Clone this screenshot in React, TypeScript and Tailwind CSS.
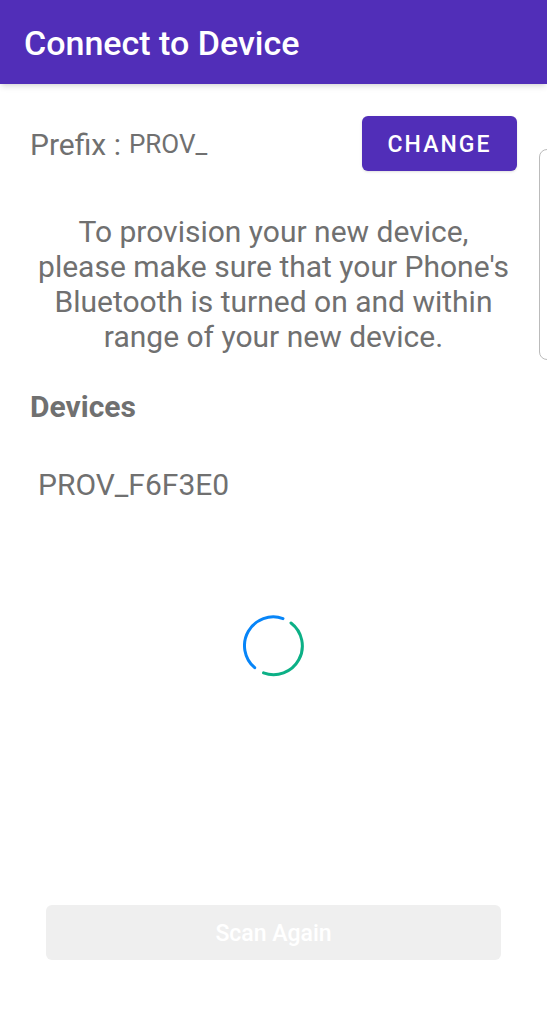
export default function App() {
  return (
    <div className="relative flex min-h-screen flex-col overflow-hidden bg-white font-['Roboto',sans-serif] text-[#707070]">
      <header className="flex h-[84px] items-center bg-[#512eb8] px-6 pt-[2px] shadow-md">
        <h1 className="text-[34px] leading-10 font-medium text-white">Connect to Device</h1>
      </header>
      <main className="flex flex-1 flex-col px-[30px] pt-8">
        <div className="flex items-center justify-between">
          <p className="flex items-center gap-2 pt-[2px] text-[30px]">
            <span>Prefix :</span>
            <span className="text-[26px]">PROV_</span>
          </p>
          <button type="button" className="h-[55px] w-[155px] rounded-md bg-[#512eb8] pt-1 text-[23px] font-medium tracking-[2px] text-white shadow-sm">
            CHANGE
          </button>
        </div>
        <p className="mt-[43px] text-center text-[30px] leading-[35px]">
          To provision your new device,<br />please make sure that your Phone's<br />Bluetooth is turned on and within<br />range of your new device.
        </p>
        <h2 className="mt-[35px] text-[30px] leading-[35px] font-bold">Devices</h2>
        <ul className="mt-[43px] px-2">
          <li>
            <button type="button" className="text-[30px] leading-[35px]">PROV_F6F3E0</button>
          </li>
        </ul>
        <div role="status" aria-label="Scanning" className="mt-[113px] flex justify-center">
          <svg width="62" height="62" viewBox="0 0 62 62" fill="none" strokeWidth="3" strokeLinecap="round">
            <path d="M11.7 52.7 A28.8 28.8 0 0 1 40 3.6" stroke="#0785f8" />
            <path d="M48 8 A28.8 28.8 0 0 1 20.5 57.9" stroke="#0cb086" />
          </svg>
        </div>
        <div className="mt-auto px-4 pb-[54px]">
          <button type="button" disabled className="h-[55px] w-full rounded-md bg-[#efefef] pt-1 text-[23px] font-medium text-white">
            Scan Again
          </button>
        </div>
      </main>
      <div className="absolute top-[149px] -right-2 h-[211px] w-4 rounded-lg border border-[#bbbbbb] bg-white" />
    </div>
  );
}
